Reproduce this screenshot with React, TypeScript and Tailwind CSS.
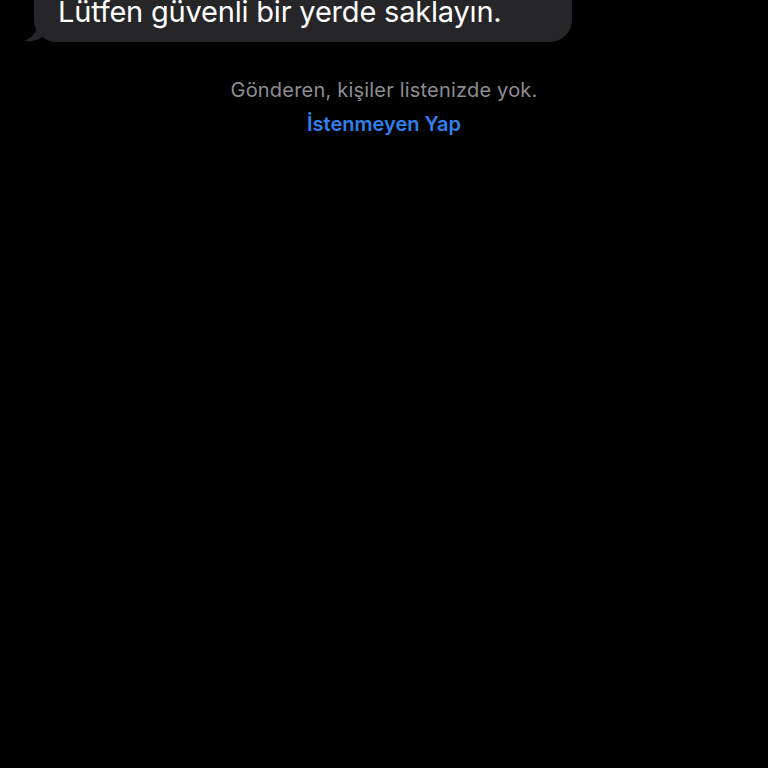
export default function App() {
  return (
    <div className="min-h-[768px] w-[768px] overflow-hidden bg-black" style={{ fontFamily: 'Inter, "Noto Sans", sans-serif' }}>
      <div className="relative ml-[34px] mt-[-20px] w-[538px]">
        <div className="rounded-[22px] bg-[#262628] pl-[24px] pt-[16px] pb-[14px]">
          <p className="text-[29px] leading-[32px] text-white tracking-[-0.2px]">Lütfen güvenli bir yerde saklayın.</p>
        </div>
        <svg className="absolute bottom-0 left-[-10px]" width="30" height="22" viewBox="0 0 30 22">
          <path d="M14 0 C14 10 10 17 0 21 C8 22 16 20 22 14 L30 14 L30 0 Z" fill="#262628" />
        </svg>
      </div>
      <div className="mt-[36px] flex flex-col items-center">
        <p className="text-[20px] leading-[25px] tracking-[0.2px] text-[#8d8d92]">Gönderen, kişiler listenizde yok.</p>
        <button className="mt-[9px] text-[20px] font-semibold leading-[24px] text-[#2f80ed]">İstenmeyen Yap</button>
      </div>
    </div>
  );
}
